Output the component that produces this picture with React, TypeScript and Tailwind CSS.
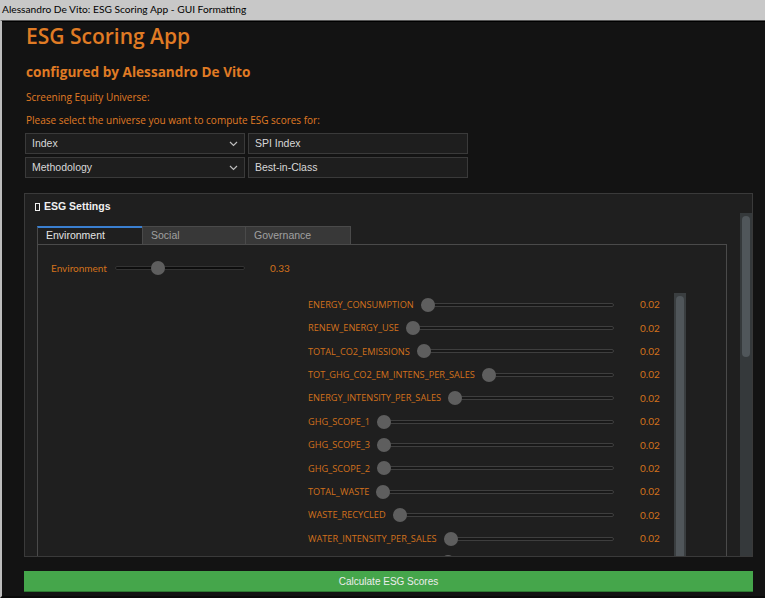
const ORANGE = 'text-[#e07b24]'

const envFactors = [
  { name: 'ENERGY_CONSUMPTION', value: 0.02 },
  { name: 'RENEW_ENERGY_USE', value: 0.02 },
  { name: 'TOTAL_CO2_EMISSIONS', value: 0.02 },
  { name: 'TOT_GHG_CO2_EM_INTENS_PER_SALES', value: 0.02 },
  { name: 'ENERGY_INTENSITY_PER_SALES', value: 0.02 },
  { name: 'GHG_SCOPE_1', value: 0.02 },
  { name: 'GHG_SCOPE_3', value: 0.02 },
  { name: 'GHG_SCOPE_2', value: 0.02 },
  { name: 'TOTAL_WASTE', value: 0.02 },
  { name: 'WASTE_RECYCLED', value: 0.02 },
  { name: 'WATER_INTENSITY_PER_SALES', value: 0.02 },
  { name: 'TOTAL_WATER_WITHDRAWAL', value: 0.02 },
]

export default function App() {
  return (
    <div className="w-[765px] h-[598px] overflow-hidden flex flex-col bg-[#c8c8c8] font-['Open_Sans',sans-serif]">
      {/* window title bar */}
      <div className="h-[20px] shrink-0 flex items-center pl-[2px] text-[10.2px] text-black font-['Lato',sans-serif]">
        Alessandro De Vito: ESG Scoring App - GUI Formatting
      </div>
      <div className="flex-1 min-h-0 flex flex-col border-t border-t-[#555] border-l-2 border-l-[#bdbdbd] border-b-2 border-b-[#0a0a0a] bg-[#131313] pl-[22px] pr-[12px]">
        <div className="h-[1px] shrink-0 bg-black -ml-[22px] -mr-[12px]" />
        <h1 className={`${ORANGE} text-[21px] font-semibold leading-[26px] mt-[1px] ml-[2px]`}>
          ESG Scoring App
        </h1>
        <h2 className={`${ORANGE} text-[13.6px] font-bold leading-[20px] mt-[13px] ml-[2px]`}>
          configured by Alessandro De Vito
        </h2>
        <p className={`${ORANGE} text-[10px] leading-[14px] mt-[8px] ml-[2px]`}>
          Screening Equity Universe:
        </p>
        <p className={`${ORANGE} text-[10px] leading-[14px] mt-[9px] ml-[2px]`}>
          Please select the universe you want to compute ESG scores for:
        </p>

        <div className="mt-[6px] ml-[1px] flex flex-col gap-[3px]">
          <div className="flex gap-[3px]">
            <Combo label="Index" />
            <Field value="SPI Index" />
          </div>
          <div className="flex gap-[3px]">
            <Combo label="Methodology" />
            <Field value="Best-in-Class" />
          </div>
        </div>

        {/* group box */}
        <div className="mt-[15px] h-[364px] shrink-0 flex flex-col border border-[#3a3a3a] bg-[#1f1f1f]">
          <div className="h-[19px] shrink-0 flex items-end pl-[10px] text-[10.5px] font-bold text-[#f0f0f0] font-['Liberation_Sans',sans-serif]">
            <span className="inline-block w-[5px] h-[8px] border border-[#f0f0f0] mr-[4px] mb-[2px]" />
            <span className="leading-[14px]">ESG Settings</span>
          </div>
          <div className="flex-1 min-h-0 flex">
            <div className="flex-1 min-w-0 overflow-hidden pt-[13px] pl-[12px] pr-[13px]">
              <TabBar />
              <div className="h-[400px] border border-[#4a4a4a] bg-[#1f1f1f] flex flex-col">
                <div className="flex items-center h-[22px] mt-[12px] pl-[13px]">
                  <span className="text-[10px] text-[#d2711c] w-[64px] font-['Lato',sans-serif]">Environment</span>
                  <Slider width={130} pos={0.31} thick />
                  <span className="ml-[25px] text-[10px] text-[#d2711c] font-['Lato',sans-serif]">0.33</span>
                </div>
                <div className="flex mt-[14px] pl-[270px]">
                  <div className="w-[350px] flex flex-col">
                    {envFactors.map((f) => (
                      <FactorRow key={f.name} name={f.name} value={f.value} />
                    ))}
                  </div>
                  <div className="ml-[16px] w-[12px] h-[320px] bg-[#3a3e40] flex justify-center pt-[3px]">
                    <div className="w-[8px] h-[300px] rounded-full bg-[#50565a]" />
                  </div>
                </div>
              </div>
            </div>
            <div className="w-[12px] shrink-0 bg-[#35393b] flex justify-center pt-[3px]">
              <div className="w-[8px] h-[141px] rounded-full bg-[#50565a]" />
            </div>
          </div>
        </div>

        <button
          type="button"
          className="mt-[14px] h-[21px] shrink-0 bg-[#45a64b] border-b border-b-[#2e7a33] text-[10px] text-[#ececec] font-['Liberation_Sans',sans-serif]"
        >
          Calculate ESG Scores
        </button>
      </div>
    </div>
  )
}

function Combo({ label }: { label: string }) {
  return (
    <div className="w-[220px] h-[21px] flex items-center justify-between border border-[#3a3a3a] bg-[#1e1e1e] pl-[6px] pr-[6px] text-[10.5px] text-[#d8d8d8] font-['Liberation_Sans',sans-serif]">
      <span>{label}</span>
      <svg width="9" height="6" viewBox="0 0 9 6" fill="none">
        <path d="M1 1l3.5 3.5L8 1" stroke="#bdbdbd" strokeWidth="1.2" />
      </svg>
    </div>
  )
}

function Field({ value }: { value: string }) {
  return (
    <div className="w-[220px] h-[21px] flex items-center border border-[#3a3a3a] bg-[#1e1e1e] pl-[6px] text-[10.5px] text-[#d8d8d8] font-['Liberation_Sans',sans-serif]">
      {value}
    </div>
  )
}

function TabBar() {
  return (
    <div className="flex h-[18px] font-['Liberation_Sans',sans-serif] text-[10.5px]">
      <div className="w-[105px] border-t-2 border-t-[#3a7fd0] border-l border-l-[#4a4a4a] bg-[#1f1f1f] text-[#e4e4e4] pl-[8px] flex items-center">
        Environment
      </div>
      <div className="w-[104px] border border-[#4a4a4a] border-b-0 bg-[#383838] text-[#a0a0a0] pl-[8px] flex items-center">
        Social
      </div>
      <div className="w-[105px] border border-[#4a4a4a] border-b-0 border-l-0 bg-[#383838] text-[#a0a0a0] pl-[8px] flex items-center">
        Governance
      </div>
    </div>
  )
}

function Slider({ width, pos, thick }: { width?: number; pos: number; thick?: boolean }) {
  return (
    <div className="relative h-[14px] flex items-center" style={width ? { width } : { flex: 1 }}>
      <div
        className={
          thick
            ? 'w-full h-[4px] rounded-full bg-[#0d0d0d] border border-[#333]'
            : 'w-full h-[4px] rounded-full bg-[#181818] border border-[#3e3e3e]'
        }
      />
      <div
        className="absolute top-0 w-[14px] h-[14px] rounded-full bg-[#5e5e5e]"
        style={{ left: `calc(${pos} * (100% - 14px))` }}
      />
    </div>
  )
}

function FactorRow({ name, value }: { name: string; value: number }) {
  return (
    <div className="h-[23.4px] shrink-0 flex items-center">
      <span className="text-[9.2px] text-[#d2711c] whitespace-nowrap mr-[7px]">{name}</span>
      <div className="w-[0px] flex-1 flex">
        <Slider pos={0} />
      </div>
      <span className="w-[44px] pl-[26px] text-[10px] text-[#d2711c] font-['Lato',sans-serif]">{value.toFixed(2)}</span>
    </div>
  )
}
